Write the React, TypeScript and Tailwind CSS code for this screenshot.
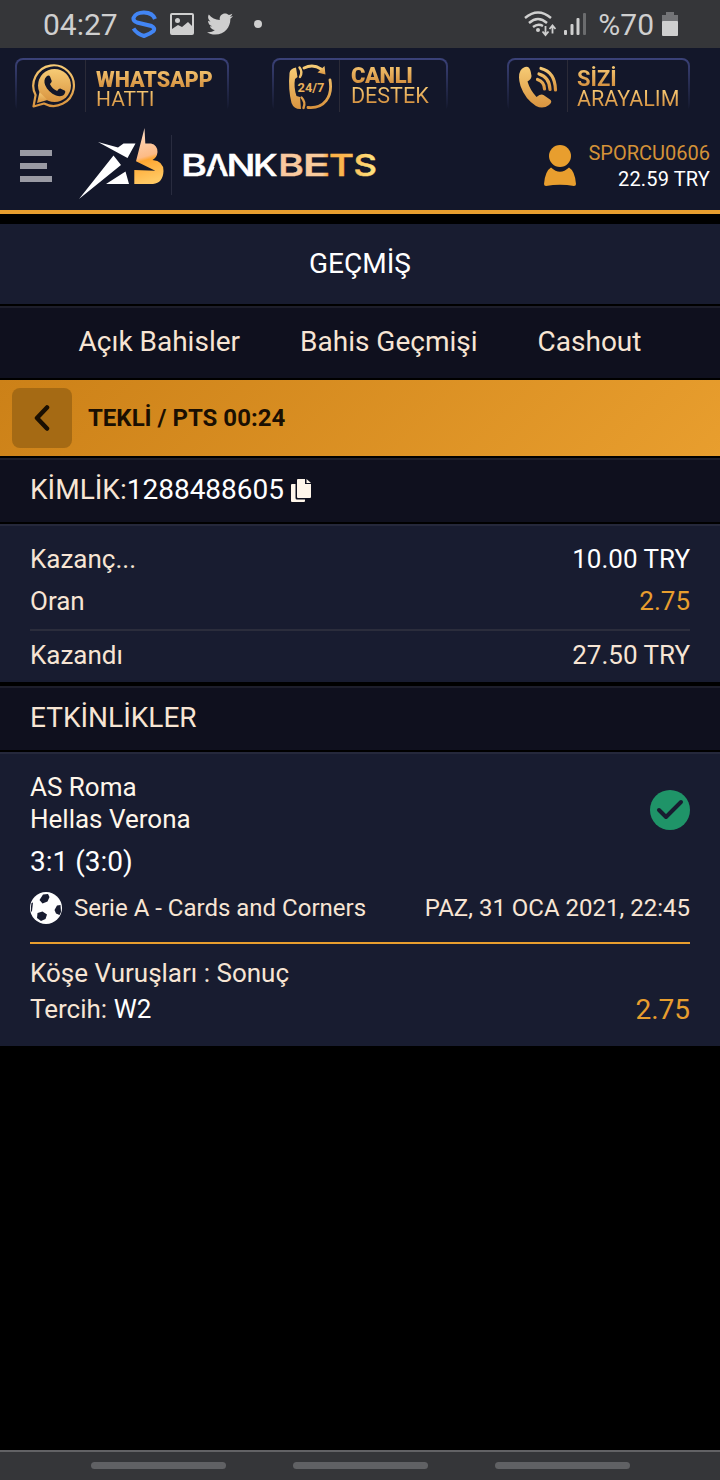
import React from 'react';
import { FaTwitter } from 'react-icons/fa';

const goldText = 'bg-gradient-to-b from-[#f9cd78] to-[#d08a38] bg-clip-text text-transparent';

// Shared gold gradient for the contact icons
function GoldGradient({ id }: { id: string }) {
    return (
        <defs>
            <linearGradient id={id} x1="0" y1="0" x2="0" y2="1">
                <stop offset="0" stopColor="#f6cb75" />
                <stop offset="1" stopColor="#d9943f" />
            </linearGradient>
        </defs>
    );
}

function WhatsappIcon() {
    return (
        <svg className="ml-[5px]" width="46" height="46" viewBox="0 0 46 46" fill="none">
            <GoldGradient id="gold-wa" />
            <path d="M2.500 43.500L4.600 32A20.300 20.300 0 1 1 13 40.500Z" stroke="url(#gold-wa)" strokeWidth="2.200" strokeLinejoin="round" />
            <circle cx="23.500" cy="22.500" r="16.500" fill="url(#gold-wa)" />
            <path d="M6 40L8.500 29L16.500 37Z" fill="url(#gold-wa)" />
            <path d="M15.500 13.500c1.500-1.500 3-1.200 3.600.2l1.500 3.700c.4 1-.1 1.800-1.700 3.500 1.500 3.200 4 5.500 7.300 7 1.600-1.900 2.400-2.700 3.500-2.200l3.800 1.900c1.100.6 1 2-.2 3.600-2 2.300-5 2.400-8.300 1.200-5-1.900-8.800-5.500-10.900-10.400-1.200-3.200-.900-6.300 1.400-8.500z" fill="#13172a" />
        </svg>
    );
}

function SupportIcon() {
    return (
        <svg className="ml-[9px] mt-[2px]" width="46" height="46" viewBox="0 0 46 46" fill="none">
            <GoldGradient id="gold-sup" />
            <path d="M1.500 9Q2 4.500 8 3.500L9.500 13 7 15Q5.500 23 8.500 32L12 33 13 45Q6 45.500 3.500 39Q0 25 1.500 9Z" fill="url(#gold-sup)" />
            <path d="M11.500 3.500Q15 8 12 13M13.500 33.500Q18 38 15.500 44" stroke="url(#gold-sup)" strokeWidth="2.400" strokeLinecap="round" />
            <path d="M16 4Q25-.5 33 5M20 43.500C36 45 45 33 42 16" stroke="url(#gold-sup)" strokeWidth="2.800" strokeLinecap="round" />
            <path d="M36.500 2L37.500 10.500 29.500 8.500Z" fill="url(#gold-sup)" />
            <text x="9.500" y="27.500" fontFamily="Roboto, sans-serif" fontSize="12" fontWeight="700" textLength="27" lengthAdjust="spacingAndGlyphs" fill="#e8b05a">24/7</text>
        </svg>
    );
}

function CallIcon() {
    return (
        <svg className="mt-[2px]" width="40" height="44" viewBox="0 0 40 44" fill="none">
            <GoldGradient id="gold-call" />
            <path d="M2.500 5.500Q6 1 10 2Q12.500 3 13.500 11Q13.500 14 9.500 16.500Q12 25 18.500 32Q23 28.500 25.500 30L32 34.500Q35 37 31 40Q25 44.500 18 41Q7 34 2.500 21Q-.5 11 2.500 5.500Z" fill="url(#gold-call)" />
            <path d="M19.500 14.500Q26.500 17 26.500 24M21 9Q31.500 12 32 24.500M23 3.500Q37 7 37.500 25" stroke="url(#gold-call)" strokeWidth="3.200" strokeLinecap="round" />
        </svg>
    );
}

interface ContactButtonProps {
    icon: React.ReactNode;
    title: string;
    subtitle: string;
    className: string;
    textClass: string;
    titleClass: string;
    subtitleClass: string;
}

function ContactButton({ icon, title, subtitle, className, textClass, titleClass, subtitleClass }: ContactButtonProps) {
    return (
        <button className={`h-[54px] shrink-0 rounded-lg bg-gradient-to-b from-[#3b4279] to-[#13172a] p-[2px] pb-0 ${className}`}>
            <span className="flex h-full rounded-t-md bg-[#13172a]">
                <span className="flex w-[69px] shrink-0 items-center justify-center border-r border-[#2b2b38]">{icon}</span>
                <span className={`flex flex-col items-start whitespace-nowrap ${textClass}`}>
                    <span className={`-mt-1 pt-1 leading-5 ${goldText} ${titleClass}`}>{title}</span>
                    <span className={`leading-5 ${goldText} ${subtitleClass}`}>{subtitle}</span>
                </span>
            </span>
        </button>
    );
}

function StatusBar() {
    return (
        <div className="flex h-12 items-center bg-[#353639] text-[#cfcfcf]">
            <span className="ml-[43px] w-[87px] pt-px text-[30px] leading-none">04:27</span>
            <svg width="28" height="28" viewBox="0 0 28 28" fill="none" stroke="#4285f4" strokeWidth="4">
                <path d="M25 9C22 .5 6 .5 3.500 8Q3 11 7 12.500L21.500 16Q25.500 18 23.500 21Q20 24 14 26Q7 24 3.500 18.500" />
            </svg>
            <svg className="ml-3" width="24" height="22" viewBox="0 0 24 22">
                <path d="M2 0h20a2 2 0 0 1 2 2v18a2 2 0 0 1-2 2H2a2 2 0 0 1-2-2V2a2 2 0 0 1 2-2zM2 2v14l6-4 4 2 6-5 4 4V2z" fill="currentColor" fillRule="evenodd" />
                <circle cx="7.500" cy="7.500" r="2.500" fill="currentColor" />
            </svg>
            <FaTwitter size={26} className="ml-[13px]" />
            <span className="ml-[21px] h-2 w-2 rounded-full bg-[#cfcfcf]" />
            <svg className="ml-auto" width="32" height="26" viewBox="0 0 32 26" fill="none" stroke="currentColor">
                <path d="M1 7Q14-4 27 7M5 12Q14 4 23 12M9 16Q14 12 19 15" strokeWidth="2.400" />
                <circle cx="14" cy="19" r="2" fill="currentColor" stroke="none" />
                <path d="M21.500 15v8M18.500 20.500l3 3.500 3-3.500M28.500 22.500v-8M25.500 18l3-3.500 3 3.500" strokeWidth="1.800" />
            </svg>
            <svg className="ml-2" width="22" height="24" viewBox="0 0 22 24" fill="currentColor">
                <rect y="18" width="3" height="5" rx="1" />
                <rect x="6.500" y="12" width="3" height="11" rx="1" />
                <rect x="12.500" y="6" width="3" height="17" rx="1" />
                <rect x="19" y="1" width="3" height="22" rx="1" fill="#6b6c6e" />
            </svg>
            <span className="ml-3 pt-px text-[30px] leading-none">%70</span>
            <svg className="ml-2 mr-[42px]" width="16" height="24" viewBox="0 0 16 24">
                <path d="M4 0h8v3h4v7H0V3h4z" fill="#737477" />
                <rect y="9" width="16" height="15" rx="1" fill="#cfcfcf" />
            </svg>
        </div>
    );
}

// Wordmark letters: x position and stretched advance
const bank = [
    { char: 'B', x: 103, width: 26 },
    { char: 'A', x: 127.5, width: 23 },
    { char: 'N', x: 148.5, width: 29 },
    { char: 'K', x: 175, width: 24.5 },
];
const bets = [
    { char: 'B', x: 200, width: 26 },
    { char: 'E', x: 224.5, width: 28 },
    { char: 'T', x: 251, width: 25 },
    { char: 'S', x: 275.5, width: 23.5 },
];

function Logo() {
    return (
        <svg className="ml-[26px] shrink-0" width="300" height="78" viewBox="0 0 300 78">
            <defs>
                <linearGradient id="bee" x1="0" y1="0" x2="0.150" y2="1">
                    <stop offset="0" stopColor="#ffe0c8" />
                    <stop offset=".55" stopColor="#fdbb86" />
                    <stop offset=".62" stopColor="#ffa732" />
                    <stop offset="1" stopColor="#ffc862" />
                </linearGradient>
                <linearGradient id="bets" x1="0" x2="1" y1="0" y2="0">
                    <stop offset="0" stopColor="#f9c8a0" />
                    <stop offset=".45" stopColor="#f9cc9c" />
                    <stop offset=".5" stopColor="#fcb043" />
                    <stop offset=".68" stopColor="#fcb64f" />
                    <stop offset="1" stopColor="#ffe783" />
                </linearGradient>
            </defs>
            <path d="M20 15L40 20.500 45.500 16.500H57.500L49.500 31ZM35.500 28.500L43 38 1 72ZM47.500 44.500L51 57H28Z" fill="#fff" />
            <path d="M66.500 1L67.300 16.500H73Q79.500 18 79.500 25Q79 30.500 74.500 33Q85.500 34 85.500 44Q85 56 75 57H56.300V43L77.300 43.700 58 34.300Z" fill="url(#bee)" />
            <path d="M93.500 8v60" stroke="#292c3f" />
            <g fontFamily="Inter, sans-serif" fontSize="30.500" fontWeight="500">
                <text y="48.500" fill="#fff" stroke="#fff" strokeWidth=".5">
                    {bank.map(({ char, x, width }) => (
                        <tspan key={x} x={x} textLength={width} lengthAdjust="spacingAndGlyphs">{char}</tspan>
                    ))}
                </text>
                <text y="48.500" fill="url(#bets)" stroke="url(#bets)" strokeWidth=".5">
                    {bets.map(({ char, x, width }) => (
                        <tspan key={x} x={x} textLength={width} lengthAdjust="spacingAndGlyphs">{char}</tspan>
                    ))}
                </text>
            </g>
            {/* the wordmark's A has no crossbar */}
            <path d="M137 38.500h4L143.800 46.500h-9.600z" fill="#13172a" />
        </svg>
    );
}

function SiteHeader() {
    return (
        <header className="h-[166px] border-b-4 border-[#e89e2e] bg-[#13172a] pt-2.5">
            <div className="flex pl-[15px]">
                <ContactButton icon={<WhatsappIcon />} title="WHATSAPP" subtitle="HATTI" className="w-[214px]" textClass="pl-[10px] pt-[10px]" titleClass="text-[21.5px] font-black" subtitleClass="text-[21px] -mt-px" />
                <ContactButton icon={<SupportIcon />} title="CANLI" subtitle="DESTEK" className="ml-[43px] w-[176px] [&>span>span:first-child]:w-[66px]" textClass="pl-[11px] pt-[6px]" titleClass="text-[22px] font-black tracking-[-0.4px]" subtitleClass="text-[21.5px]" />
                <ContactButton icon={<CallIcon />} title="SİZİ" subtitle="ARAYALIM" className="ml-[59px] w-[183px] [&>span>span:first-child]:w-[59px]" textClass="pl-[9px] pt-[9px]" titleClass="text-[22px] font-bold" subtitleClass="text-[21.5px]" />
            </div>
            <div className="mt-[15px] flex items-center">
                <button className="ml-5 flex w-8 flex-col gap-[7px]">
                    <span className="h-1.5 w-8 bg-[#999aa3]" />
                    <span className="h-1.5 w-[27px] bg-[#999aa3]" />
                    <span className="h-1.5 w-8 bg-[#999aa3]" />
                </button>
                <Logo />
                <svg className="ml-auto" width="32" height="42" viewBox="0 0 32 42" fill="#e89e2e">
                    <circle cx="16" cy="11" r="11" />
                    <path d="M7 22.500Q16 31 25 22.500Q31 26 32 39Q32 41 30 41Q16 38.500 2 41Q0 41 0 39Q1 26 7 22.500Z" />
                </svg>
                <div className="ml-3 mr-2.5 text-right text-xl leading-[26px]">
                    <div className="text-[#d49238]">SPORCU0606</div>
                    <div className="tracking-[0.15px] text-white">22.59 TRY</div>
                </div>
            </div>
        </header>
    );
}

function SoccerBall() {
    return (
        <svg width="32" height="32" viewBox="0 0 32 32">
            <circle cx="16" cy="16" r="16" fill="#fff" />
            <path d="M13 2.500L18 2 19.500 5 17.500 9.500 12.500 11.500 9.500 8ZM27 13.500L30.500 13 31 20 29.500 23 26 21.500 24.500 18ZM7.500 21L12.500 19.500 17 22.500 15.500 27 11 29 7 26ZM1.500 11L3 10.500 2 19 1 20Q.5 15 1.500 11Z" fill="#181c30" />
        </svg>
    );
}

function App() {
    const tabs = ['Açık Bahisler', 'Bahis Geçmişi', 'Cashout'];

    return (
        <div className="flex h-[1480px] w-[720px] flex-col overflow-hidden bg-black font-['Roboto','Noto_Sans',sans-serif] text-[#f7e5d4]">
            <StatusBar />
            <SiteHeader />

            <h1 className="mt-2.5 flex h-20 items-center justify-center bg-[#181c30] text-[28px] text-white">GEÇMİŞ</h1>
            <nav className="mt-0.5 flex h-[72px] items-center justify-center gap-[60px] border-t-2 border-[#1d1e2b] bg-[#0f101e] pb-0.5 text-[28px]">
                {tabs.map(tab => (
                    <button key={tab}>{tab}</button>
                ))}
            </nav>

            {/* Bet title */}
            <div className="mt-0.5 flex h-[76px] items-center bg-[linear-gradient(135deg,#cc8118,#e89e2e)] pl-3 text-[#1a0f02]">
                <button className="flex h-[60px] w-[60px] items-center justify-center rounded-lg bg-[#a56a14]">
                    <svg width="16" height="26" viewBox="0 0 16 26" fill="none" stroke="currentColor" strokeWidth="4.500" strokeLinecap="round" strokeLinejoin="round">
                        <path d="M13 2.500L3 13l10 10.500" />
                    </svg>
                </button>
                <span className="ml-4 text-2xl font-bold">TEKLİ / PTS 00:24</span>
            </div>
            <div className="mt-0.5 flex h-16 items-center border-t-2 border-[#1d1e2b] bg-[#0f101e] pb-0.5 pl-[30px] text-[28px]">
                <span>KİMLİK:</span>
                <span className="text-white">1288488605</span>
                <svg className="ml-[7px]" width="20" height="23" viewBox="0 0 20 23" fill="#fff6ea">
                    <path d="M7 0h7v5h6v13q0 1-1 1H7q-1 0-1-1V1q0-1 1-1zM15.500 0L20 4h-4.500zM1 5h3.500v14q0 1.500 1.500 1.500h8V22q0 1-1 1H1q-1 0-1-1V6q0-1 1-1z" />
                </svg>
            </div>

            {/* Amounts */}
            <section className="mt-0.5 h-[158px] border-t-2 border-[#25283b] bg-[#181c30] px-[30px] pt-3 text-[26px]">
                <div className="flex h-[42px] items-center justify-between">
                    <span>Kazanç...</span>
                    <span className="text-white">10.00 TRY</span>
                </div>
                <div className="flex h-[42px] items-center justify-between">
                    <span>Oran</span>
                    <span className="text-[#e89e2e]">2.75</span>
                </div>
                <div className="mt-[7px] flex h-[50px] items-center justify-between border-t-2 border-[#2b2d3c]">
                    <span>Kazandı</span>
                    <span>27.50 TRY</span>
                </div>
            </section>

            <h2 className="mt-1 flex h-16 items-center border-t-2 border-[#1d1e2b] bg-[#0f101e] pb-0.5 pl-[30px] text-[28px]">ETKİNLİKLER</h2>

            {/* Event */}
            <section className="mt-0.5 h-[294px] border-t-2 border-[#25283b] bg-[#181c30] px-[30px] pt-[17px]">
                <div className="flex items-center justify-between text-[26px] leading-8 text-[#fff6ea]">
                    <div>
                        <div>AS Roma</div>
                        <div>Hellas Verona</div>
                    </div>
                    <svg className="mt-[14px]" width="40" height="40" viewBox="0 0 40 40" fill="none">
                        <circle cx="20" cy="20" r="20" fill="#1f9468" />
                        <path d="M9 20l7 7 15-15" stroke="#181c30" strokeWidth="4" strokeLinecap="round" strokeLinejoin="round" />
                    </svg>
                </div>
                <div className="mt-[5px] text-[28px] leading-[44px] text-white">3:1 (3:0)</div>
                <div className="mt-[7px] flex h-[34px] items-center text-2xl">
                    <SoccerBall />
                    <span className="ml-3">Serie A - Cards and Corners</span>
                    <span className="ml-auto">PAZ, 31 OCA 2021, 22:45</span>
                </div>
                <div className="mt-[17px] border-t-2 border-[#e89e2e] pt-[11px] text-[26px] leading-9">
                    <div>Köşe Vuruşları : Sonuç</div>
                    <div className="flex justify-between">
                        <span>Tercih: <span className="text-white">W2</span></span>
                        <span className="pt-px text-[28px] text-[#e89e2e]">2.75</span>
                    </div>
                </div>
            </section>

            {/* Android navigation bar */}
            <div className="mt-auto flex h-[30px] items-center justify-center gap-[67px] border-t-2 border-[#626265] bg-[#353639] pb-0.5">
                <span className="h-[7px] w-[135px] rounded-full bg-[#606164]" />
                <span className="h-[7px] w-[135px] rounded-full bg-[#606164]" />
                <span className="h-[7px] w-[135px] rounded-full bg-[#606164]" />
            </div>
        </div>
    );
}

export default App;
